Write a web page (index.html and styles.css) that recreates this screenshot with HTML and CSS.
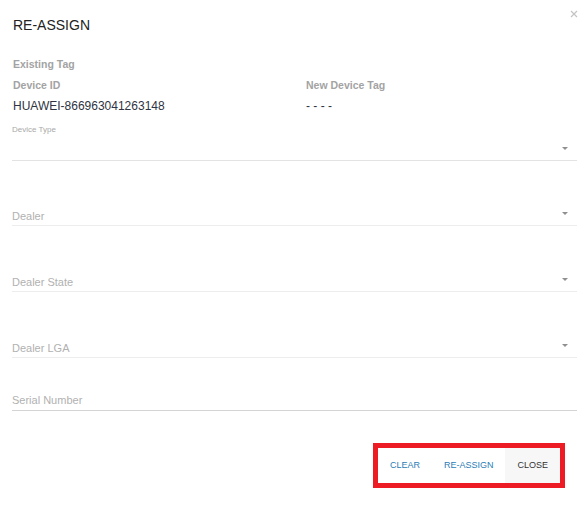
FILE: index.html
```html
<!DOCTYPE html>
<html>
<head>
<meta charset="utf-8">
<link rel="stylesheet" href="styles.css">
</head>
<body>
<div class="dialog">
  <div class="head">
    <h1 class="title">RE-ASSIGN</h1>
    <button class="x" aria-label="close">
      <svg width="8" height="8" viewBox="0 0 8 8"><path d="M1 1L7 7M7 1L1 7" stroke="#c4c4c4" stroke-width="1.2" fill="none"/></svg>
    </button>
  </div>
  <div class="info">
    <div class="lbl">Existing Tag</div>
    <div class="grid">
      <div class="lbl">Device ID</div>
      <div class="lbl">New Device Tag</div>
      <div class="val">HUAWEI-866963041263148</div>
      <div class="val">- - - -</div>
    </div>
  </div>
  <div class="field f-type">
    <div class="float">Device Type</div>
    <div class="select"><span class="ph"></span><span class="caret"></span></div>
  </div>
  <div class="field f-gap">
    <div class="select disabled"><span class="ph">Dealer</span><span class="caret"></span></div>
  </div>
  <div class="field f-gap">
    <div class="select disabled"><span class="ph">Dealer State</span><span class="caret"></span></div>
  </div>
  <div class="field f-gap">
    <div class="select disabled"><span class="ph">Dealer LGA</span><span class="caret"></span></div>
  </div>
  <div class="field f-serial">
    <div class="input"><span class="ph">Serial Number</span></div>
  </div>
  <div class="footer">
    <div class="actions">
      <button class="btn blue">CLEAR</button>
      <button class="btn blue">RE-ASSIGN</button>
      <button class="btn close">CLOSE</button>
    </div>
  </div>
</div>
</body>
</html>
```
FILE: styles.css
```css
html, body {
  margin: 0;
  padding: 0;
  background: #fff;
}
body {
  font-family: "Liberation Sans", Arial, sans-serif;
  width: 587px;
  height: 518px;
  overflow: hidden;
}
.dialog {
  padding: 0 10px 0 12px;
}
.head {
  display: flex;
  justify-content: space-between;
  align-items: flex-start;
  padding-top: 10px;
}
.title {
  margin: 5px 0 0 1px;
  font-size: 14px;
  line-height: 20px;
  font-weight: normal;
  color: #222;
}
.x {
  border: 0;
  background: none;
  padding: 0;
  margin: 0 -1px 0 0;
  width: 8px;
  height: 8px;
  display: flex;
}
.info {
  margin-top: 19px;
  padding-left: 1px;
}
.lbl {
  font-size: 10.5px;
  line-height: 21px;
  font-weight: bold;
  color: #a3a3a3;
}
.grid {
  display: grid;
  grid-template-columns: 293px 1fr;
}
.val {
  font-size: 12px;
  line-height: 21px;
  color: #2f3442;
}
.float {
  margin-top: 8px;
  font-size: 8px;
  line-height: 10px;
  color: #a8a8a8;
}
.select, .input {
  display: flex;
  justify-content: space-between;
  align-items: flex-start;
  height: 18px;
  border-bottom: 1px solid #e3e3e3;
}
.f-type .select {
  margin-top: 7px;
}
.select.disabled {
  border-bottom-color: #ededed;
}
.f-gap {
  margin-top: 46px;
}
.f-gap + .f-gap {
  margin-top: 47px;
}
.f-serial {
  margin-top: 32px;
}
.input {
  height: 20px;
  align-items: center;
  border-bottom-color: #d4d4d4;
}
.ph {
  font-size: 11px;
  line-height: 18px;
  color: #b1b1b1;
  align-self: flex-end;
}
.input .ph {
  line-height: 20px;
}
.caret {
  width: 0;
  height: 0;
  margin: 5px 9px 0 0;
  border-left: 3px solid transparent;
  border-right: 3px solid transparent;
  border-top: 3px solid #8f8f8f;
}
.footer {
  display: flex;
  justify-content: flex-end;
  margin-top: 32px;
  padding-right: 12px;
}
.actions {
  display: flex;
  border: 5px solid #ed1c24;
}
.btn {
  height: 35px;
  padding: 0 12px;
  border: 0;
  background: #fff;
  font-family: "Liberation Sans", Arial, sans-serif;
  font-size: 9px;
  line-height: 35px;
}
.blue {
  color: #2a7db5;
}
.close {
  background: #f7f7f7;
  color: #333;
}
```
